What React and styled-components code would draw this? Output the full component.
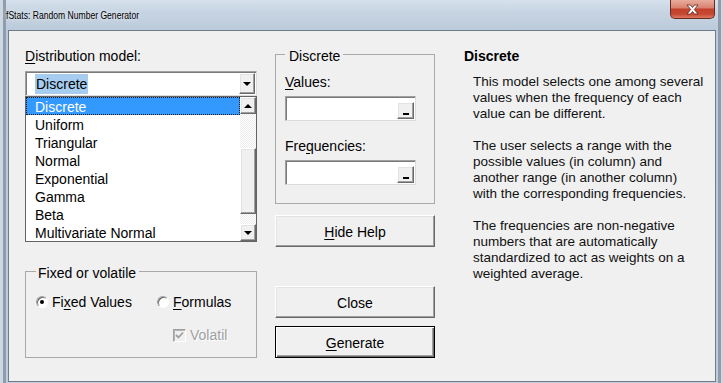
import React from "react";
import styled, { createGlobalStyle } from "styled-components";

const GlobalStyle = createGlobalStyle`
  html, body { margin: 0; padding: 0; }
  body {
    width: 723px;
    height: 383px;
    overflow: hidden;
    font-family: "Liberation Sans", Arial, sans-serif;
    background: #bccbdb;
  }
`;

const Window = styled.div`
  width: 723px;
  height: 383px;
  box-sizing: border-box;
  display: flex;
  flex-direction: column;
  background: linear-gradient(180deg, #d6e1ec 0px, #c6d4e2 12px, #bccbdb 30px, #bfcddc 100%);
  box-shadow: inset 3px 0 #cdd8e3, inset 6px 0 #8f9cab, inset -2px 0 #cdd8e3, inset -5px 0 #8f9cab;
`;

const TitleBar = styled.div`
  height: 30px;
  display: flex;
  align-items: flex-start;
  padding: 0 8px 0 6px;
`;

const TitleText = styled.div`
  margin-top: 8px;
  font-size: 11px;
  line-height: 14px;
  white-space: nowrap;
  color: #000;
  text-shadow: 0 0 6px #fff;
  transform: scaleX(0.78);
  transform-origin: left center;
`;

const CloseButton = styled.div`
  margin-left: auto;
  width: 45px;
  height: 19px;
  box-sizing: border-box;
  border: 1px solid #6a2c22;
  border-top: none;
  border-radius: 0 0 5px 5px;
  background: linear-gradient(180deg, #e8ab9d 0%, #d98470 42%, #c3412c 52%, #c64731 78%, #dd7a60 100%);
  display: flex;
  align-items: center;
  justify-content: center;
`;

const FrameBody = styled.div`
  flex: 1;
  display: flex;
  padding: 0 7px 1px 8px;
`;

const Client = styled.div`
  flex: 1;
  display: flex;
  border: 1px solid #6f7c8a;
  background: #f0f0f0;
  padding-left: 16px;
  color: #000;
`;

const LeftCol = styled.div`
  width: 232px;
  padding-top: 17px;
  display: flex;
  flex-direction: column;
`;

const MidCol = styled.div`
  width: 160px;
  margin-left: 18px;
  padding-top: 14px;
  display: flex;
  flex-direction: column;
`;

const HelpCol = styled.div`
  margin-left: 29px;
  padding-top: 17px;
`;

const FieldLabel = styled.div`
  font-size: 14px;
  line-height: 16px;
  margin-top: ${(p) => p.$gap || 0}px;
`;

const Key = styled.span`
  text-decoration: underline;
  text-underline-offset: 2px;
`;

const sunken = `
  border: 1px solid #a0a0a0;
  border-right-color: #dcdcdc;
  border-bottom-color: #dcdcdc;
  box-shadow: inset 1px 1px #7a7a7a;
`;

const raised = `
  background: #f0f0f0;
  border: 1px solid;
  border-color: #fff #696969 #696969 #fff;
  box-shadow: inset -1px -1px #a0a0a0, inset 1px 1px #e3e3e3;
`;

const Combo = styled.div`
  position: relative;
  margin-top: 7px;
  height: 25px;
  box-sizing: border-box;
  ${sunken}
  background: #fff;
  display: flex;
  align-items: center;
  padding: 0 1px 0 9px;
`;

const ComboValue = styled.span`
  font-size: 14px;
  line-height: 19px;
  padding: 1px 1px 0;
  background: #a6cdf0;
`;

const DropButton = styled.div`
  margin-left: auto;
  width: 16px;
  height: 21px;
  box-sizing: border-box;
  ${raised}
  display: flex;
  align-items: center;
  justify-content: center;
`;

const Arrow = styled.span`
  width: 0;
  height: 0;
  border-left: 4px solid transparent;
  border-right: 4px solid transparent;
  ${(p) => (p.$up ? "border-bottom: 4px solid #000;" : "border-top: 4px solid #000;")}
`;

const ListPopup = styled.div`
  position: absolute;
  top: calc(100% + 1px);
  left: -1px;
  width: 232px;
  height: 146px;
  box-sizing: border-box;
  border: 1px solid #646464;
  background: #fff;
  display: flex;
  z-index: 2;
`;

const Items = styled.div`
  flex: 1;
  display: flex;
  flex-direction: column;
`;

const Item = styled.div`
  height: 18px;
  line-height: 20px;
  overflow: hidden;
  font-size: 14px;
  padding-left: 9px;
  ${(p) =>
    p.$selected &&
    `
    background: #3399ff;
    color: #fff;
    outline: 1px dotted #1a1a1a;
    outline-offset: -1px;
  `}
`;

const ScrollBar = styled.div`
  width: 16px;
  display: flex;
  flex-direction: column;
`;

const ScrollBtn = styled.div`
  height: 17px;
  box-sizing: border-box;
  ${raised}
  display: flex;
  align-items: center;
  justify-content: center;
`;

const Track = styled.div`
  flex: 1;
  background: repeating-conic-gradient(#ffffff 0 25%, #ececec 0 50%) 0 0 / 2px 2px;
`;

const Thumb = styled.div`
  margin-top: 34px;
  height: 66px;
  box-sizing: border-box;
  ${raised}
`;

const Group = styled.fieldset`
  margin: ${(p) => p.$top || 0}px 0 0 0;
  padding: ${(p) => p.$pad};
  border: 1px solid #a9a9a9;
  min-inline-size: 0;
  box-sizing: border-box;
  width: ${(p) => p.$width}px;
`;

const GroupLegend = styled.legend`
  padding: 3px 3px 0 ${(p) => p.$indent}px;
  font-size: 14px;
  line-height: 16px;
`;

const RefEdit = styled.div`
  margin-top: ${(p) => p.$gap}px;
  width: 131px;
  height: 25px;
  box-sizing: border-box;
  ${sunken}
  background: #fff;
  display: flex;
  align-items: flex-end;
  justify-content: flex-end;
  padding: 1px;
`;

const RefButton = styled.div`
  width: 17px;
  height: 17px;
  box-sizing: border-box;
  ${raised}
  display: flex;
  align-items: flex-end;
  justify-content: center;
  padding-bottom: 3px;
`;

const Dash = styled.span`
  width: 6px;
  height: 2px;
  background: #000;
`;

const Button = styled.div`
  margin-top: ${(p) => p.$gap}px;
  height: 32px;
  box-sizing: border-box;
  padding-top: 2px;
  background: #f0f0f0;
  font-size: 14px;
  display: flex;
  align-items: center;
  justify-content: center;
  border: 1px solid;
  border-color: ${(p) => (p.$default ? "#000" : "#fff #696969 #696969 #fff")};
  box-shadow: ${(p) =>
    p.$default
      ? "inset 1px 1px #fff, inset -1px -1px #696969, inset -2px -2px #a0a0a0"
      : "inset -1px -1px #a0a0a0, inset 1px 1px #e3e3e3"};
`;

const OptionGrid = styled.div`
  display: grid;
  grid-template-columns: 121px 1fr;
  row-gap: 17px;
`;

const Option = styled.div`
  display: flex;
  align-items: center;
  height: 16px;
  font-size: 14px;
  margin-left: ${(p) => p.$indent || 0}px;
  color: ${(p) => (p.$disabled ? "#a0a0a0" : "#000")};
  text-shadow: ${(p) => (p.$disabled ? "1px 1px #fff" : "none")};
`;

const Radio = styled.span`
  width: 12px;
  height: 12px;
  box-sizing: border-box;
  border-radius: 50%;
  border: 1px solid;
  border-color: #a0a0a0 #ffffff #ffffff #a0a0a0;
  box-shadow: inset 1px 1px #696969;
  background: #fff;
  margin-right: 4px;
  display: flex;
  align-items: center;
  justify-content: center;
  &::after {
    content: "";
    width: 4px;
    height: 4px;
    border-radius: 50%;
    background: ${(p) => (p.$checked ? "#000" : "transparent")};
  }
`;

const CheckBox = styled.span`
  width: 13px;
  height: 13px;
  box-sizing: border-box;
  border: 1px solid;
  border-color: #a0a0a0 #ffffff #ffffff #a0a0a0;
  box-shadow: inset 1px 1px #b4b4b4;
  background: #f0f0f0;
  margin-right: 4px;
  display: flex;
  align-items: center;
  justify-content: center;
`;

const HelpTitle = styled.div`
  font-size: 14px;
  font-weight: bold;
  line-height: 16px;
`;

const HelpBody = styled.div`
  margin: 10px 0 0 9px;
  font-size: 13.5px;
  line-height: 16px;
  color: #111;
`;

const Para = styled.div`
  & + & {
    margin-top: 16px;
  }
`;

const Line = styled.div`
  white-space: nowrap;
`;

const distributions = [
  "Discrete",
  "Uniform",
  "Triangular",
  "Normal",
  "Exponential",
  "Gamma",
  "Beta",
  "Multivariate Normal",
];

const help = [
  [
    "This model selects one among several",
    "values when the frequency of each",
    "value can be different.",
  ],
  [
    "The user selects a range with the",
    "possible values (in column) and",
    "another range (in another column)",
    "with the corresponding frequencies.",
  ],
  [
    "The frequencies are non-negative",
    "numbers that are automatically",
    "standardized to act as weights on a",
    "weighted average.",
  ],
];

function CloseGlyph() {
  return (
    <svg width="13" height="11" viewBox="0 0 13 11">
      <path
        d="M1 1 H4.5 L6.5 3.5 L8.5 1 H12 L8.3 5.5 L12 10 H8.5 L6.5 7.5 L4.5 10 H1 L4.7 5.5 Z"
        fill="#fff"
        stroke="#5e2219"
        strokeWidth="0.8"
      />
    </svg>
  );
}

function CheckGlyph() {
  return (
    <svg width="9" height="9" viewBox="0 0 9 9">
      <path d="M1 4 L3.5 6.5 L8 1.5" fill="none" stroke="#a0a0a0" strokeWidth="1.8" />
    </svg>
  );
}

export default function App() {
  return (
    <>
      <GlobalStyle />
      <Window>
        <TitleBar>
          <TitleText>fStats: Random Number Generator</TitleText>
          <CloseButton>
            <CloseGlyph />
          </CloseButton>
        </TitleBar>
        <FrameBody>
          <Client>
            <LeftCol>
              <FieldLabel>
                <Key>D</Key>istribution model:
              </FieldLabel>
              <Combo>
                <ComboValue>Discrete</ComboValue>
                <DropButton>
                  <Arrow />
                </DropButton>
                <ListPopup>
                  <Items>
                    {distributions.map((d, i) => (
                      <Item key={d} $selected={i === 0}>
                        {d}
                      </Item>
                    ))}
                  </Items>
                  <ScrollBar>
                    <ScrollBtn>
                      <Arrow $up />
                    </ScrollBtn>
                    <Track>
                      <Thumb />
                    </Track>
                    <ScrollBtn>
                      <Arrow />
                    </ScrollBtn>
                  </ScrollBar>
                </ListPopup>
              </Combo>
              <Group $top={166} $width={232} $pad="13px 0 14px 10px">
                <GroupLegend $indent={2}>Fixed or volatile</GroupLegend>
                <OptionGrid>
                  <Option>
                    <Radio $checked />
                    Fi<Key>x</Key>ed Values
                  </Option>
                  <Option>
                    <Radio />
                    <Key>F</Key>ormulas
                  </Option>
                  <span />
                  <Option $indent={16} $disabled>
                    <CheckBox>
                      <CheckGlyph />
                    </CheckBox>
                    Volatil
                  </Option>
                </OptionGrid>
              </Group>
            </LeftCol>
            <MidCol>
              <Group $width={160} $pad="10px 0 18px 9px">
                <GroupLegend $indent={4}>Discrete</GroupLegend>
                <FieldLabel>
                  <Key>V</Key>alues:
                </FieldLabel>
                <RefEdit $gap={6}>
                  <RefButton>
                    <Dash />
                  </RefButton>
                </RefEdit>
                <FieldLabel $gap={17}>
                  Fre<Key>q</Key>uencies:
                </FieldLabel>
                <RefEdit $gap={6}>
                  <RefButton>
                    <Dash />
                  </RefButton>
                </RefEdit>
              </Group>
              <Button $gap={11}>
                <span>
                  <Key>H</Key>ide Help
                </span>
              </Button>
              <Button $gap={39}>Close</Button>
              <Button $gap={8} $default>
                <span>
                  <Key>G</Key>enerate
                </span>
              </Button>
            </MidCol>
            <HelpCol>
              <HelpTitle>Discrete</HelpTitle>
              <HelpBody>
                {help.map((p, i) => (
                  <Para key={i}>
                    {p.map((l) => (
                      <Line key={l}>{l}</Line>
                    ))}
                  </Para>
                ))}
              </HelpBody>
            </HelpCol>
          </Client>
        </FrameBody>
      </Window>
    </>
  );
}
